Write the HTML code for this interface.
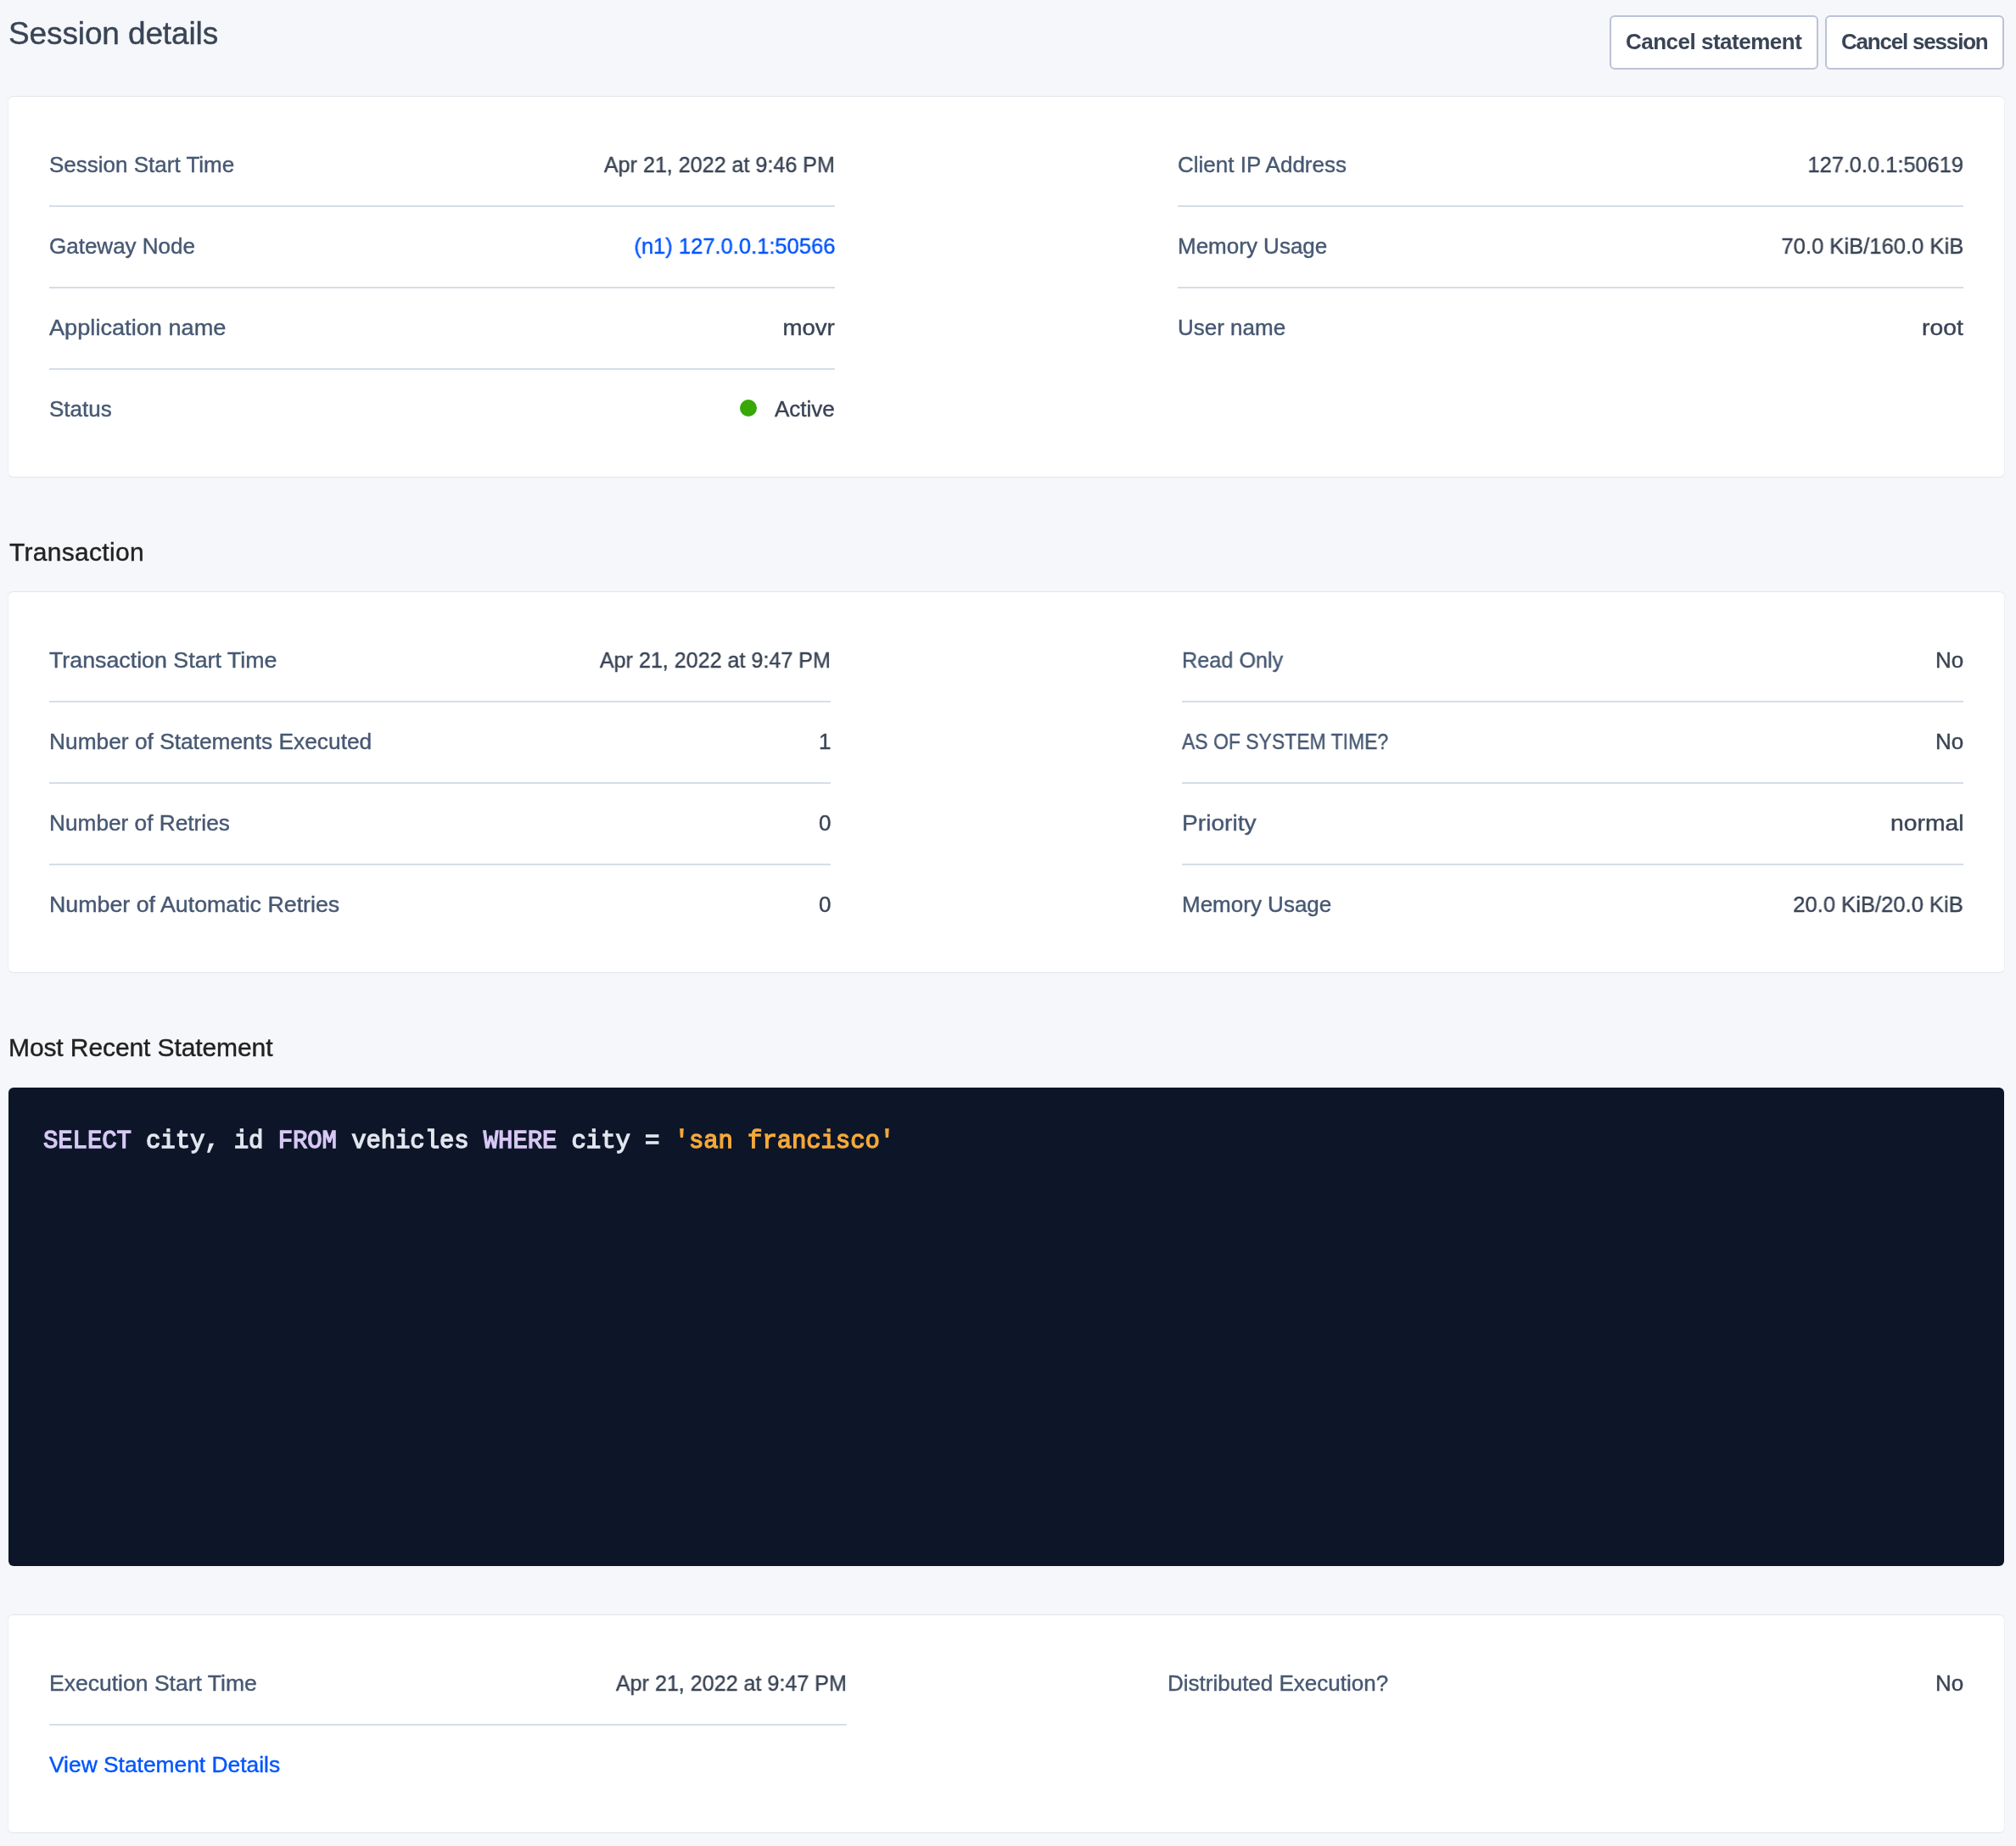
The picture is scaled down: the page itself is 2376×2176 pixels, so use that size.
<!DOCTYPE html>
<html><head><meta charset="utf-8"><title>Session details</title>
<style>
*{margin:0;padding:0;box-sizing:border-box}
html,body{width:2376px;height:2176px;overflow:hidden;background:#f5f7fa}
body{position:relative;font-family:"Liberation Sans",sans-serif}
.t{position:absolute;line-height:1;white-space:nowrap;will-change:transform;-webkit-text-stroke:0.4px currentColor}
.title{color:#394455}
.btn{position:absolute;background:#fff;border:2px solid #bcc2d7;border-radius:6px}
.btxt{color:#394455;font-weight:bold;-webkit-text-stroke:0}
.card{position:absolute;background:#fff;border-radius:6px;border-top:1px solid #e1e5eb;border-bottom:1px solid #e1e5eb;box-shadow:-1px 0 0 #eef0f4,1px 0 0 #eef0f4}
.lab{color:#475872}
.val{color:#394455}
.link{color:#0055ff}
.dv{position:absolute;background:#d6dde7}
.dot{position:absolute;background:#37a806;border-radius:50%}
.h2{color:#222222}
.code{position:absolute;background:#0d1628;border-radius:6px}
.mono{font-family:"Liberation Mono",monospace;font-weight:normal;color:#e2e6ef;-webkit-text-stroke:1.3px currentColor}
.kw{color:#d8c8f5}
.str{color:#f5a93a}
</style></head>
<body>
<div class="t title" style="left:10px;top:21.17px;font-size:37px;letter-spacing:-0.12px;">Session details</div>
<div class="btn" style="left:1897px;top:18px;width:246px;height:64px;"></div>
<div class="btn" style="left:2151px;top:18px;width:211px;height:64px;"></div>
<div class="t btxt" style="left:1916px;top:35.99px;font-size:26px;letter-spacing:-0.5px;">Cancel statement</div>
<div class="t btxt" style="left:2170px;top:35.99px;font-size:26px;letter-spacing:-1.2px;">Cancel session</div>
<div class="card" style="left:10px;top:113px;width:2352px;height:450px;"></div>
<div class="t lab" style="left:58px;top:181.49px;font-size:26px;">Session Start Time</div>
<div class="t val" style="right:1392.00px;text-align:right;top:181.49px;font-size:26px;transform:scaleX(0.9649);transform-origin:right center;">Apr 21, 2022 at 9:46 PM</div>
<div class="t lab" style="left:58px;top:277.49px;font-size:26px;">Gateway Node</div>
<div class="t link" style="right:1392.00px;text-align:right;top:277.49px;font-size:26px;transform:scaleX(0.9819);transform-origin:right center;">(n1) 127.0.0.1:50566</div>
<div class="t lab" style="left:58px;top:373.49px;font-size:26px;transform:scaleX(1.0451);transform-origin:left center;">Application name</div>
<div class="t val" style="right:1392.00px;text-align:right;top:373.49px;font-size:26px;transform:scaleX(1.0623);transform-origin:right center;">movr</div>
<div class="t lab" style="left:58px;top:469.49px;font-size:26px;">Status</div>
<div class="t val" style="right:1392.00px;text-align:right;top:469.49px;font-size:26px;">Active</div>
<div class="dv" style="left:58px;top:242px;width:926px;height:2px;"></div>
<div class="dv" style="left:58px;top:338px;width:926px;height:2px;"></div>
<div class="dv" style="left:58px;top:434px;width:926px;height:2px;"></div>
<div class="dot" style="left:872px;top:471px;width:20px;height:20px;"></div>
<div class="t lab" style="left:1388px;top:181.49px;font-size:26px;">Client IP Address</div>
<div class="t val" style="right:62.00px;text-align:right;top:181.49px;font-size:26px;transform:scaleX(0.9762);transform-origin:right center;">127.0.0.1:50619</div>
<div class="t lab" style="left:1388px;top:277.49px;font-size:26px;">Memory Usage</div>
<div class="t val" style="right:62.00px;text-align:right;top:277.49px;font-size:26px;transform:scaleX(0.9844);transform-origin:right center;">70.0 KiB/160.0 KiB</div>
<div class="t lab" style="left:1388px;top:373.49px;font-size:26px;">User name</div>
<div class="t val" style="right:62.00px;text-align:right;top:373.49px;font-size:26px;transform:scaleX(1.0871);transform-origin:right center;">root</div>
<div class="dv" style="left:1388px;top:242px;width:926px;height:2px;"></div>
<div class="dv" style="left:1388px;top:338px;width:926px;height:2px;"></div>
<div class="t h2" style="left:11px;top:636.00px;font-size:30px;letter-spacing:0.3px;">Transaction</div>
<div class="card" style="left:10px;top:697px;width:2352px;height:450px;"></div>
<div class="t lab" style="left:58px;top:765.49px;font-size:26px;transform:scaleX(1.0298);transform-origin:left center;">Transaction Start Time</div>
<div class="t val" style="right:1397.00px;text-align:right;top:765.49px;font-size:26px;transform:scaleX(0.9649);transform-origin:right center;">Apr 21, 2022 at 9:47 PM</div>
<div class="t lab" style="left:58px;top:861.49px;font-size:26px;transform:scaleX(1.0119);transform-origin:left center;">Number of Statements Executed</div>
<div class="t val" style="right:1397.00px;text-align:right;top:861.49px;font-size:26px;">1</div>
<div class="t lab" style="left:58px;top:957.49px;font-size:26px;transform:scaleX(1.0091);transform-origin:left center;">Number of Retries</div>
<div class="t val" style="right:1397.00px;text-align:right;top:957.49px;font-size:26px;">0</div>
<div class="t lab" style="left:58px;top:1053.49px;font-size:26px;transform:scaleX(1.0297);transform-origin:left center;">Number of Automatic Retries</div>
<div class="t val" style="right:1397.00px;text-align:right;top:1053.49px;font-size:26px;">0</div>
<div class="dv" style="left:58px;top:826px;width:921px;height:2px;"></div>
<div class="dv" style="left:58px;top:922px;width:921px;height:2px;"></div>
<div class="dv" style="left:58px;top:1018px;width:921px;height:2px;"></div>
<div class="t lab" style="left:1393px;top:765.49px;font-size:26px;transform:scaleX(0.9707);transform-origin:left center;">Read Only</div>
<div class="t val" style="right:62.00px;text-align:right;top:765.49px;font-size:26px;">No</div>
<div class="t lab" style="left:1393px;top:861.49px;font-size:26px;transform:scaleX(0.8827);transform-origin:left center;">AS OF SYSTEM TIME?</div>
<div class="t val" style="right:62.00px;text-align:right;top:861.49px;font-size:26px;">No</div>
<div class="t lab" style="left:1393px;top:957.49px;font-size:26px;transform:scaleX(1.0822);transform-origin:left center;">Priority</div>
<div class="t val" style="right:62.00px;text-align:right;top:957.49px;font-size:26px;transform:scaleX(1.0881);transform-origin:right center;">normal</div>
<div class="t lab" style="left:1393px;top:1053.49px;font-size:26px;">Memory Usage</div>
<div class="t val" style="right:62.00px;text-align:right;top:1053.49px;font-size:26px;transform:scaleX(0.9843);transform-origin:right center;">20.0 KiB/20.0 KiB</div>
<div class="dv" style="left:1393px;top:826px;width:921px;height:2px;"></div>
<div class="dv" style="left:1393px;top:922px;width:921px;height:2px;"></div>
<div class="dv" style="left:1393px;top:1018px;width:921px;height:2px;"></div>
<div class="t h2" style="left:10px;top:1219.80px;font-size:30px;letter-spacing:-0.1px;">Most Recent Statement</div>
<div class="code" style="left:10px;top:1282px;width:2352px;height:564px;"></div>
<div class="t mono" style="left:51px;top:1331.45px;font-size:29px;letter-spacing:-0.11px;"><span class="kw">SELECT</span> city, id <span class="kw">FROM</span> vehicles <span class="kw">WHERE</span> city = <span class="str">'san francisco'</span></div>
<div class="card" style="left:10px;top:1903px;width:2352px;height:258px;"></div>
<div class="t lab" style="left:58px;top:1971.49px;font-size:26px;transform:scaleX(1.0206);transform-origin:left center;">Execution Start Time</div>
<div class="t val" style="right:1378.00px;text-align:right;top:1971.49px;font-size:26px;transform:scaleX(0.9649);transform-origin:right center;">Apr 21, 2022 at 9:47 PM</div>
<div class="dv" style="left:58px;top:2032px;width:940px;height:2px;"></div>
<div class="t link" style="left:58px;top:2067.49px;font-size:26px;transform:scaleX(1.0141);transform-origin:left center;">View Statement Details</div>
<div class="t lab" style="left:1376px;top:1971.49px;font-size:26px;">Distributed Execution?</div>
<div class="t val" style="right:62.00px;text-align:right;top:1971.49px;font-size:26px;">No</div>
</body></html>
